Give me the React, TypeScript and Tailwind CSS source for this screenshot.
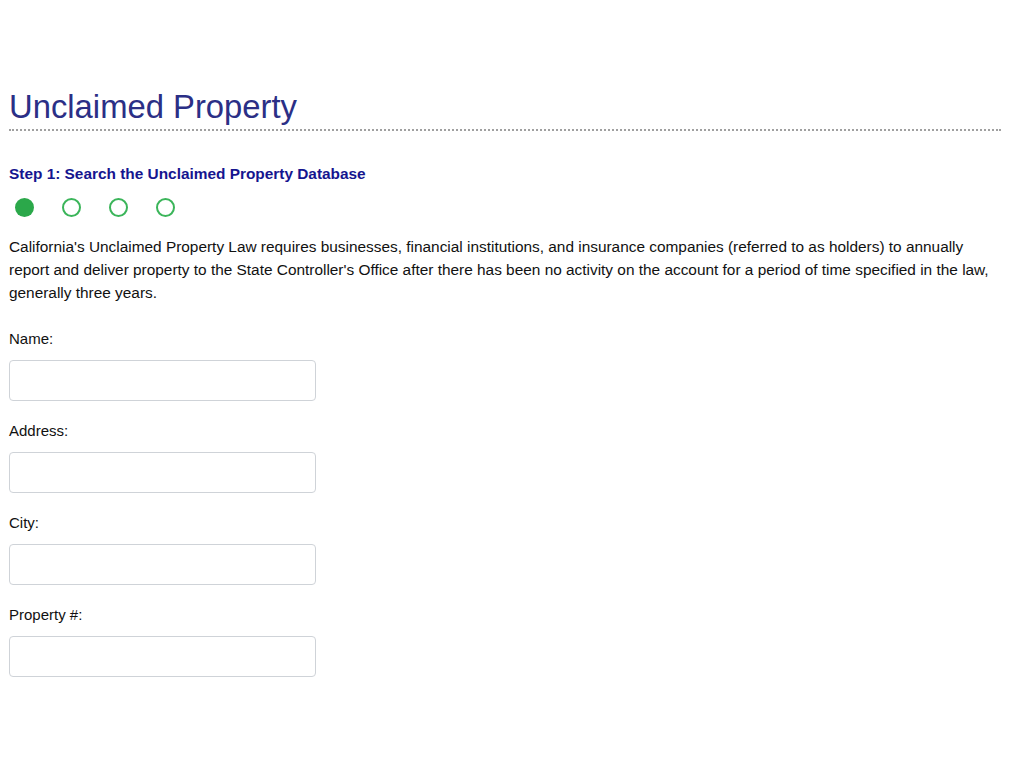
export default function App() {
  const fields = ["Name:", "Address:", "City:", "Property #:"];

  return (
    <div className="min-h-screen bg-white font-['Liberation_Sans',Arial,sans-serif] text-[#111]">
      <div className="pl-[9px] pr-[23px] pt-[88px]">
        <h1 className="text-[32.8px] leading-[38px] text-[#2b2f86]">Unclaimed Property</h1>
        <div className="mt-[3px] border-b-2 border-dotted border-[#a0a0a0]" />

        <h2 className="mt-[34px] text-[15.4px] font-bold leading-[18px] text-[#15158f]">
          Step 1: Search the Unclaimed Property Database
        </h2>

        {/* progress dots */}
        <div className="mt-[15px] flex items-center gap-[28px] pl-[6px]">
          <span className="h-[19px] w-[19px] rounded-full bg-[#2ba84a]" />
          <span className="h-[19px] w-[19px] rounded-full border-[2.5px] border-[#3bb55a]" />
          <span className="h-[19px] w-[19px] rounded-full border-[2.5px] border-[#3bb55a]" />
          <span className="h-[19px] w-[19px] rounded-full border-[2.5px] border-[#3bb55a]" />
        </div>

        <p className="mt-[18px] text-[15.4px] leading-[23px]">
          California's Unclaimed Property Law requires businesses, financial institutions, and insurance companies
          (referred to as holders) to annually report and deliver property to the State Controller's Office after there
          has been no activity on the account for a period of time specified in the law, generally three years.
        </p>

        <form className="mt-[25px] flex flex-col">
          {fields.map((label) => (
            <div key={label} className="mb-[20px] flex flex-col">
              <label className="text-[15px] leading-[20px]">{label}</label>
              <input
                type="text"
                className="mt-[11px] h-[41px] w-[307px] rounded-[4px] border border-[#cfd3d8] bg-white px-2 outline-none"
              />
            </div>
          ))}
        </form>
      </div>
    </div>
  );
}
